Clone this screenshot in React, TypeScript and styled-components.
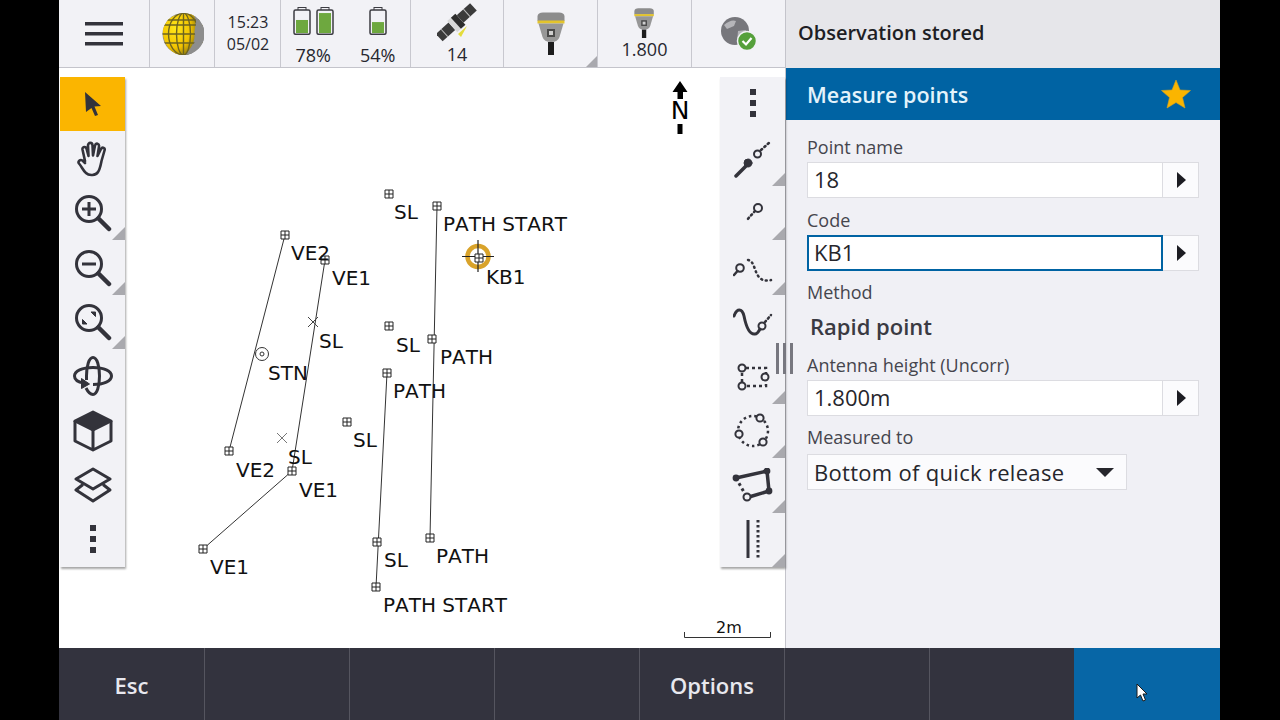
import styled, { createGlobalStyle } from 'styled-components';

const GlobalStyle = createGlobalStyle`
  html, body {
    margin: 0;
    background: #000;
  }
  * {
    box-sizing: border-box;
  }
`;
const Screen = styled.div`
  display: grid;
  grid-template-columns: 726px 435px;
  grid-template-rows: 68px 580px 72px;
  width: 1280px;
  height: 720px;
  padding: 0 60px 0 59px;
  position: relative;
  overflow: hidden;
  font-family: 'Open Sans', 'Noto Sans', sans-serif;
  color: #27272f;
`;
const TopBar = styled.div`
  display: grid;
  grid-template-columns: 91px 65px 66px 130px 93px 94px 94px 93px;
  background: #f2f2f6;
  border-bottom: 1px solid #c4c4cb;
`;
const TopCell = styled.div<{ $corner?: boolean }>`
  position: relative;
  display: flex;
  flex-direction: column;
  align-items: center;
  justify-content: center;
  border-right: 1px solid #c8c8cf;
  font-size: 18px;
  &:last-child {
    border-right: none;
  }
  ${(p) =>
    p.$corner &&
    `&::after {
      content: '';
      position: absolute;
      right: 0;
      bottom: 0;
      border-style: solid;
      border-width: 0 0 11px 11px;
      border-color: transparent transparent #a9a9ae transparent;
    }`}
`;
const Clock = styled.div`
  font-size: 16px;
  line-height: 22px;
  text-align: center;
  margin-top: -2px;
  padding-left: 1px;
`;
const Batteries = styled.div`
  display: grid;
  grid-template-columns: 1fr 1fr;
  width: 100%;
  justify-items: center;
  padding: 5px 0 0;
`;
const BatteryCol = styled.div`
  display: flex;
  flex-direction: column;
  align-items: center;
  gap: 9px;
  font-size: 18px;
  line-height: 22px;
`;
const BatteryRow = styled.div`
  display: flex;
  gap: 5px;
  height: 28px;
`;
const CellNumber = styled.div`
  font-size: 18px;
  line-height: 20px;
  margin-top: 1px;
`;
const MapArea = styled.div`
  position: relative;
  display: flex;
  justify-content: space-between;
  align-items: flex-start;
  padding: 9px 0 0 1px;
  background: #fff;
`;
const MapCanvas = styled.svg`
  position: absolute;
  inset: 0;
  width: 100%;
  height: 100%;
  font-family: 'DejaVu Sans', sans-serif;
  font-size: 20px;
  font-kerning: none;
  fill: #111;
`;
const ToolBar = styled.div`
  position: relative;
  display: grid;
  grid-template-rows: repeat(9, 54.45px);
  width: 65px;
  background: #f2f2f6;
  box-shadow: 1px 2px 2px rgba(0, 0, 0, 0.35);
`;
const Tool = styled.div<{ $active?: boolean; $corner?: boolean }>`
  position: relative;
  display: flex;
  align-items: center;
  justify-content: center;
  background: ${(p) => (p.$active ? '#fbb500' : 'transparent')};
  ${(p) =>
    p.$corner &&
    `&::after {
      content: '';
      position: absolute;
      right: 0;
      bottom: 0;
      border-style: solid;
      border-width: 0 0 13px 13px;
      border-color: transparent transparent #a9a9ae transparent;
    }`}
`;
const Panel = styled.div`
  grid-column: 2;
  grid-row: 1 / 3;
  display: flex;
  flex-direction: column;
  background: #f0f0f5;
  border-left: 1px solid #c4c4cb;
`;
const StatusBar = styled.div`
  display: flex;
  align-items: center;
  height: 68px;
  padding-left: 12px;
  padding-bottom: 4px;
  background: #e6e6ea;
  font-size: 20px;
  font-weight: 600;
  color: #1e1e24;
`;
const TitleBar = styled.div`
  display: flex;
  align-items: center;
  justify-content: space-between;
  height: 52px;
  padding: 0 29px 0 21px;
  background: #0063a3;
  font-size: 21.5px;
  font-weight: 600;
  color: #e4f3fb;
`;
const Form = styled.div`
  display: flex;
  flex-direction: column;
  padding: 15px 21px 0;
`;
const FieldLabel = styled.div`
  font-size: 18px;
  line-height: 24px;
  color: #45454d;
  margin-bottom: 3px;
`;
const FieldRow = styled.div<{ $gap: number }>`
  display: flex;
  width: 392px;
  height: 36px;
  margin-bottom: ${(p) => p.$gap}px;
`;
const FieldValue = styled.div<{ $focused?: boolean }>`
  flex: 1;
  display: flex;
  align-items: center;
  padding-left: ${(p) => (p.$focused ? '5px' : '6px')};
  padding-bottom: 3px;
  background: #fff;
  border: ${(p) => (p.$focused ? '2px solid #0063a3' : '1px solid #dcdce1')};
  font-size: 22px;
  font-weight: 500;
  color: #26262c;
`;
const ArrowButton = styled.div`
  width: 36px;
  display: flex;
  align-items: center;
  justify-content: center;
  padding-left: 2px;
  background: #fbfbfd;
  border: 1px solid #dcdce1;
  border-left: none;
`;
const Triangle = styled.div`
  width: 0;
  height: 0;
  border-style: solid;
  border-width: 8px 0 8px 9px;
  border-color: transparent transparent transparent #1c1c22;
`;
const StaticValue = styled.div`
  font-size: 22px;
  line-height: 30px;
  font-weight: 600;
  color: #3a3a42;
  padding-left: 3px;
  margin: 4px 0 12px;
`;
const Select = styled.div`
  display: flex;
  align-items: center;
  justify-content: space-between;
  width: 320px;
  height: 36px;
  margin-top: 2px;
  padding: 0 12px 0 6px;
  background: #fbfbfd;
  border: 1px solid #dcdce1;
  font-size: 22px;
  font-weight: 500;
  letter-spacing: 0.3px;
  color: #26262c;
`;
const DownTriangle = styled.div`
  width: 0;
  height: 0;
  border-style: solid;
  border-width: 9px 9px 0 9px;
  border-color: #26262c transparent transparent transparent;
`;
const BottomBar = styled.div`
  grid-column: 1 / 3;
  display: grid;
  grid-template-columns: repeat(7, 145px) 1fr;
  background: #33333e;
`;
const SoftKey = styled.div<{ $primary?: boolean }>`
  display: flex;
  align-items: center;
  justify-content: center;
  padding-top: 1px;
  background: ${(p) => (p.$primary ? '#0766a6' : 'transparent')};
  border-left: ${(p) => (p.$primary ? 'none' : '1px solid #55555f')};
  font-size: 22px;
  font-weight: 600;
  color: #e8e8ee;
  &:first-child {
    border-left: none;
  }
`;
const Grip = styled.div`
  position: absolute;
  left: 776px;
  top: 343px;
  display: flex;
  gap: 4px;
`;
const GripLine = styled.div`
  width: 3px;
  height: 31px;
  background: #77777f;
`;
const Pointer = styled.svg`
  position: absolute;
  left: 1136px;
  top: 683px;
`;

const ink = '#33333b';

const Kebab = () => (
  <svg width="12" height="34" viewBox="0 0 12 34" fill={ink}>
    <rect x="3" y="2" width="6" height="6" />
    <rect x="3" y="13" width="6" height="6" />
    <rect x="3" y="24" width="6" height="6" />
  </svg>
);

const Magnifier = ({ kind }: { kind: 'plus' | 'minus' | 'fit' }) => (
  <svg width="38" height="38" viewBox="0 0 38 38" fill="none" stroke={ink} strokeWidth="3">
    <circle cx="15" cy="15" r="12.5" />
    <line x1="24.5" y1="24.5" x2="35" y2="35" strokeWidth="4.5" strokeLinecap="round" />
    {kind !== 'fit' && <line x1="8" y1="15" x2="22" y2="15" />}
    {kind === 'plus' && <line x1="15" y1="8" x2="15" y2="22" />}
    {kind === 'fit' && <path d="M17 9h4.500v4.500zM13 21h-4.500v-4.500z" fill={ink} strokeWidth="1" />}
  </svg>
);

const ToolIcons = {
  arrow: (
    <svg width="18" height="26" viewBox="0 0 18 26" fill={ink}>
      <path d="M1 1 L17 15 L10.500 15.500 L14 24 L11 25 L7.500 17 L2 21 Z" />
    </svg>
  ),
  hand: (
    <svg width="32" height="36" viewBox="0 0 32 36" fill="none" stroke={ink} strokeWidth="2.600" strokeLinecap="round" strokeLinejoin="round">
      <path d="M8 20 L5.500 8.500 C5 5.500 9 5 9.600 8 L11.500 15 L11 4.500 C11 1 15.500 1 15.500 4.500 L16 14.500 L18 4.500 C18.800 1.500 22.500 2.500 22 5.500 L20.500 15 L24 8 C25.500 5.500 28.500 7 27.500 9.500 L24.500 20 C23.500 25 23 28 21 31 C19 34.500 12 35 9 32 C6 29.500 5 26 2 22.500 C0.500 20.500 3 18 5.500 19.500 L8 22" />
    </svg>
  ),
  orbit: (
    <svg width="40" height="40" viewBox="0 0 40 40" fill="none" stroke={ink} strokeWidth="3">
      <path d="M11 27 C4 26 1.500 23 1.500 20 C1.500 15 9 11.500 20 11.500 C31 11.500 38.500 15 38.500 20 C38.500 25 31 28.500 20 28.500" />
      <path d="M13 32 C15 36 17 38.500 20 38.500 C24 38.500 26.500 30 26.500 20 C26.500 10 24 1.500 20 1.500 C16 1.500 13.500 10 13.500 20 L13.500 24" />
      <path d="M8.500 22.500 L16.500 28 L8.500 32.500z" fill={ink} strokeWidth="1" />
    </svg>
  ),
  cube: (
    <svg width="40" height="42" viewBox="0 0 40 42" fill="none" stroke={ink} strokeWidth="3" strokeLinejoin="round">
      <path d="M20 2 L38 11 L20 20 L2 11 Z" fill={ink} />
      <path d="M2 11 V31 L20 40 L38 31 V11 M20 20 V40" />
    </svg>
  ),
  layers: (
    <svg width="38" height="36" viewBox="0 0 38 36" fill="none" stroke={ink} strokeWidth="3" strokeLinejoin="round">
      <path d="M19 2 L36 12 L19 22 L2 12 Z" />
      <path d="M9 17.500 L2 23 L19 34 L36 23 L29 17.500" />
    </svg>
  ),
  inside: (
    <svg width="38" height="38" viewBox="0 0 38 38" fill="none" stroke={ink} strokeLinecap="round">
      <line x1="2" y1="36" x2="13" y2="25" strokeWidth="3.500" />
      <circle cx="14" cy="23" r="4" fill={ink} />
      <circle cx="23.500" cy="14" r="3.500" strokeWidth="2" />
      <path d="M27 10 L36 2" strokeWidth="2.500" strokeDasharray="1.500 3" />
    </svg>
  ),
  stakeEnd: (
    <svg width="24" height="22" viewBox="0 0 24 22" fill="none" stroke={ink} strokeLinecap="round">
      <circle cx="17" cy="6" r="4" strokeWidth="2" />
      <path d="M14 9 L5 19" strokeWidth="2.500" strokeDasharray="1.500 3" />
    </svg>
  ),
  curveDots: (
    <svg width="40" height="30" viewBox="0 0 40 30" fill="none" stroke={ink} strokeLinecap="round">
      <line x1="1" y1="22" x2="4.500" y2="18" strokeWidth="2.500" />
      <circle cx="7" cy="15" r="3.800" strokeWidth="2" />
      <path d="M15 7 C22 8 21 20 27 25 C30 28 34 28 38 27" strokeWidth="2.500" strokeDasharray="1 3.800" />
    </svg>
  ),
  curve: (
    <svg width="40" height="30" viewBox="0 0 40 30" fill="none" stroke={ink}>
      <path d="M1 9 C4 1 9 1 11 9 C13 19 16 28 22 27 C24 27 26 24 27 22" strokeWidth="3" strokeLinecap="round" />
      <circle cx="29" cy="19" r="3.500" strokeWidth="2" />
      <path d="M32 15 L38 8" strokeWidth="2.500" strokeDasharray="1.500 3" strokeLinecap="round" />
    </svg>
  ),
  rectDots: (
    <svg width="34" height="30" viewBox="0 0 34 30" fill="none" stroke={ink} strokeWidth="2">
      <path d="M10 7 H30 V25 H10 M6 12 V21" strokeWidth="2.500" strokeDasharray="3 3" />
      <circle cx="6" cy="7" r="3.500" fill="#f2f2f6" />
      <circle cx="6" cy="25" r="3.500" fill="#f2f2f6" />
      <circle cx="29" cy="16" r="3.500" fill="#f2f2f6" />
    </svg>
  ),
  circleDots: (
    <svg width="38" height="36" viewBox="0 0 38 36" fill="none" stroke={ink}>
      <circle cx="19" cy="18" r="15" strokeWidth="2.500" strokeDasharray="2.500 3" />
      <circle cx="26" cy="5" r="3.600" strokeWidth="2" fill="#f2f2f6" />
      <circle cx="5" cy="21" r="3.600" strokeWidth="2" fill="#f2f2f6" />
      <circle cx="29" cy="29" r="3.600" strokeWidth="2" fill="#f2f2f6" />
    </svg>
  ),
  polygon: (
    <svg width="42" height="34" viewBox="0 0 42 34" fill="none" stroke={ink} strokeWidth="3.500">
      <path d="M4 10 L35 3 L37 23 L17 29" />
      <path d="M4 10 L13 26" strokeDasharray="3 3" strokeWidth="3" />
      <circle cx="4" cy="10" r="3.400" fill={ink} strokeWidth="0" />
      <circle cx="35" cy="3" r="3.400" fill={ink} strokeWidth="0" />
      <circle cx="37" cy="23" r="3.400" fill={ink} strokeWidth="0" />
      <circle cx="15" cy="29" r="3.500" fill="#f2f2f6" strokeWidth="2" />
    </svg>
  ),
  parallel: (
    <svg width="14" height="40" viewBox="0 0 14 40" fill="none" stroke={ink}>
      <line x1="2" y1="0" x2="2" y2="38" strokeWidth="3" />
      <line x1="12" y1="0" x2="12" y2="38" strokeWidth="3" strokeDasharray="2.500 2.500" />
    </svg>
  ),
};

const Globe = () => (
  <svg width="44" height="44" viewBox="-1.500 0 44 44">
    <defs>
      <radialGradient id="gold" cx="40%" cy="35%" r="70%">
        <stop offset="0%" stopColor="#ffe81a" />
        <stop offset="65%" stopColor="#f2c300" />
        <stop offset="100%" stopColor="#8f7a10" />
      </radialGradient>
      <clipPath id="ball">
        <circle cx="22" cy="22" r="21" />
      </clipPath>
    </defs>
    <circle cx="22" cy="22" r="21" fill="#8d8d8d" />
    <g clipPath="url(#ball)">
      <path d="M1 14 C8 3 18 0 32 2 C36 12 32 18 33 24 C33 32 27 40 22 44 C10 44 0 32 1 14Z" fill="url(#gold)" />
      <g fill="none" stroke="#6d6420" strokeWidth="1.400">
        <path d="M0 13 H44 M0 22 H44 M0 31 H44 M3 8 H40" />
        <ellipse cx="22" cy="22" rx="7" ry="21" />
        <ellipse cx="22" cy="22" rx="15" ry="21" />
        <line x1="22" y1="0" x2="22" y2="44" />
      </g>
      <path d="M33 2 C37 12 32 18 34 25 C34 33 28 40 23 44 H44 V0 Z" fill="#8d8d8d" />
    </g>
  </svg>
);

const Battery = ({ level }: { level: number }) => (
  <svg width="18" height="28" viewBox="0 0 18 28">
    <rect x="5" y="0.500" width="8" height="3" fill="#f2f2f6" stroke="#3c3c42" />
    <rect x="1" y="3" width="16" height="24.300" rx="1.500" fill="#f2f2f6" stroke="#3c3c42" strokeWidth="1.500" />
    <rect x="3" y={26 - 21 * level} width="12" height={21 * level} fill="#6ea83f" />
  </svg>
);

const Satellite = () => (
  <svg width="40" height="40" viewBox="0 0 40 40">
    <g transform="rotate(-42 20 20)">
      <rect x="-3" y="14" width="17" height="10" fill="#3b3b3b" />
      <rect x="25" y="14" width="18" height="10" fill="#3b3b3b" />
      <line x1="4" y1="14" x2="4" y2="24" stroke="#bbb" />
      <line x1="34" y1="14" x2="34" y2="24" stroke="#bbb" />
      <rect x="14" y="12" width="11" height="15" fill="#d8d8d8" />
      <rect x="19" y="12" width="6" height="15" fill="#2d2d2d" />
    </g>
    <path d="M21 31 L30 23 L24 34z" fill="#e4dc3b" />
  </svg>
);

const Receiver = ({ scale }: { scale: number }) => (
  <svg width={28 * scale} height={43 * scale} viewBox="0 0 28 43">
    <path d="M0.500 4 Q1 0.500 6 0.500 H22 Q27 0.500 27.500 4 V9 H0.500Z" fill="#8c8c8c" />
    <rect x="0.500" y="8.500" width="27" height="3" fill="#e3c42c" />
    <path d="M1.500 11.500 H26.500 L22.500 25 Q21 30 14 30 Q7 30 5.500 25Z" fill="#979797" />
    <rect x="10" y="17" width="8" height="8" fill="#4a4a4a" />
    <rect x="12" y="19" width="4" height="4" fill="#cfcfcf" />
    <rect x="11" y="30" width="6" height="13" fill="#1d1d1d" />
  </svg>
);

const WebStatus = () => (
  <svg width="38" height="36" viewBox="0 -2 38 36">
    <circle cx="15" cy="13" r="14" fill="#77777c" />
    <path d="M4 7 Q11 1 16 3 L14 8 L7 11 Z M18 13 L26 12 L24 22 L17 24 Z" fill="#b5b5b9" />
    <circle cx="27" cy="23" r="9.500" fill="#55a03b" stroke="#f2f2f6" strokeWidth="1.500" />
    <path d="M22.500 23 L26 26.500 L31.500 20" fill="none" stroke="#fff" strokeWidth="2.200" />
  </svg>
);

const Hamburger = () => (
  <svg width="38" height="26" viewBox="0 0 38 26" fill="#33333b">
    <rect x="0" y="1" width="38" height="3.500" />
    <rect x="0" y="11" width="38" height="3.500" />
    <rect x="0" y="21" width="38" height="3.500" />
  </svg>
);

const Star = () => (
  <svg width="30" height="30" viewBox="0 0 30 30">
    <path d="M15 1 L19 11 L29.500 11.500 L21.500 18.500 L24 29 L15 23.500 L6 29 L8.500 18.500 L0.500 11.500 L11 11Z" fill="#fbb500" stroke="#d9a21c" strokeWidth="0.600" />
  </svg>
);

const points = [
  [389, 194], [437, 206], [285, 235], [325, 260], [229, 451], [292, 471], [203, 549],
  [389, 326], [432, 339], [387, 373], [347, 422], [377, 542], [376, 587], [430, 538], [479, 258],
];
const lines = [
  [285, 235, 229, 451],
  [325, 260, 292, 471],
  [292, 471, 203, 549],
  [437, 206, 430, 538],
  [387, 373, 376, 587],
];
const labels: [string, number, number][] = [
  ['SL', 394, 219], ['PATH START', 443, 231], ['VE2', 291, 260], ['VE1', 332, 285], ['KB1', 486, 284],
  ['SL', 319, 348], ['STN', 268, 380], ['SL', 396, 352], ['PATH', 440, 364], ['PATH', 393, 398],
  ['SL', 353, 447], ['SL', 288, 464], ['VE2', 236, 477], ['VE1', 299, 497], ['VE1', 210, 574],
  ['SL', 384, 567], ['PATH', 436, 563], ['PATH START', 383, 612],
];

const PointMap = () => (
  <MapCanvas viewBox="59 68 726 580">
    {lines.map(([x1, y1, x2, y2], i) => (
      <line key={i} x1={x1} y1={y1} x2={x2} y2={y2} stroke="#333" strokeWidth="1" />
    ))}
    <circle cx="478" cy="256.500" r="10.500" fill="none" stroke="#d9a32a" strokeWidth="4.500" />
    <path d="M462 256.500 H494 M478 240 V272" stroke="#222" strokeWidth="1.200" />
    {points.map(([x, y], i) => (
      <path
        key={i}
        d={`M${x - 4} ${y - 4} h8 v8 h-8 z M${x} ${y - 4} v8 M${x - 4} ${y} h8`}
        fill="#fff"
        stroke="#222"
        strokeWidth="1"
      />
    ))}
    <path d="M308 317 L318 327 M318 317 L308 327" stroke="#444" strokeWidth="1" />
    <path d="M277 433 L287 443 M287 433 L277 443" stroke="#777" strokeWidth="1" />
    <circle cx="262" cy="354" r="6.500" fill="none" stroke="#333" />
    <circle cx="262" cy="354" r="2" fill="none" stroke="#333" />
    {labels.map(([text, x, y], i) => (
      <text key={i} x={x} y={y}>
        {text}
      </text>
    ))}
    <path d="M680 81 L687.500 92 H683 V99 H677.500 V92 H672.500 Z" fill="#000" />
    <text x="680" y="119" textAnchor="middle" fontSize="25" fill="#000">
      N
    </text>
    <rect x="677.500" y="124" width="5" height="10" fill="#000" />
    <path d="M684.500 632 V637.500 H770.500 V632" fill="none" stroke="#333" />
    <text x="729" y="633" textAnchor="middle" fontSize="16">
      2m
    </text>
  </MapCanvas>
);

export default function App() {
  return (
    <Screen>
      <GlobalStyle />
      <TopBar>
        <TopCell>
          <Hamburger />
        </TopCell>
        <TopCell>
          <Globe />
        </TopCell>
        <TopCell>
          <Clock>
            15:23
            <br />
            05/02
          </Clock>
        </TopCell>
        <TopCell>
          <Batteries>
            <BatteryCol>
              <BatteryRow>
                <Battery level={0.62} />
                <Battery level={0.95} />
              </BatteryRow>
              78%
            </BatteryCol>
            <BatteryCol>
              <BatteryRow>
                <Battery level={0.52} />
              </BatteryRow>
              54%
            </BatteryCol>
          </Batteries>
        </TopCell>
        <TopCell>
          <Satellite />
          <CellNumber>14</CellNumber>
        </TopCell>
        <TopCell $corner>
          <Receiver scale={1} />
        </TopCell>
        <TopCell>
          <Receiver scale={0.72} />
          <CellNumber>1.800</CellNumber>
        </TopCell>
        <TopCell>
          <WebStatus />
        </TopCell>
      </TopBar>
      <Panel>
        <StatusBar>Observation stored</StatusBar>
        <TitleBar>
          Measure points
          <Star />
        </TitleBar>
        <Form>
          <FieldLabel>Point name</FieldLabel>
          <FieldRow $gap={10}>
            <FieldValue>18</FieldValue>
            <ArrowButton>
              <Triangle />
            </ArrowButton>
          </FieldRow>
          <FieldLabel>Code</FieldLabel>
          <FieldRow $gap={9}>
            <FieldValue $focused>KB1</FieldValue>
            <ArrowButton>
              <Triangle />
            </ArrowButton>
          </FieldRow>
          <FieldLabel>Method</FieldLabel>
          <StaticValue>Rapid point</StaticValue>
          <FieldLabel>Antenna height (Uncorr)</FieldLabel>
          <FieldRow $gap={9}>
            <FieldValue>1.800m</FieldValue>
            <ArrowButton>
              <Triangle />
            </ArrowButton>
          </FieldRow>
          <FieldLabel>Measured to</FieldLabel>
          <Select>
            Bottom of quick release
            <DownTriangle />
          </Select>
        </Form>
      </Panel>
      <MapArea>
        <PointMap />
        <ToolBar>
          <Tool $active>{ToolIcons.arrow}</Tool>
          <Tool>{ToolIcons.hand}</Tool>
          <Tool $corner>
            <Magnifier kind="plus" />
          </Tool>
          <Tool $corner>
            <Magnifier kind="minus" />
          </Tool>
          <Tool $corner>
            <Magnifier kind="fit" />
          </Tool>
          <Tool>{ToolIcons.orbit}</Tool>
          <Tool>{ToolIcons.cube}</Tool>
          <Tool>{ToolIcons.layers}</Tool>
          <Tool>
            <Kebab />
          </Tool>
        </ToolBar>
        <ToolBar>
          <Tool>
            <Kebab />
          </Tool>
          <Tool $corner>{ToolIcons.inside}</Tool>
          <Tool $corner>{ToolIcons.stakeEnd}</Tool>
          <Tool $corner>{ToolIcons.curveDots}</Tool>
          <Tool>{ToolIcons.curve}</Tool>
          <Tool $corner>{ToolIcons.rectDots}</Tool>
          <Tool $corner>{ToolIcons.circleDots}</Tool>
          <Tool $corner>{ToolIcons.polygon}</Tool>
          <Tool $corner>{ToolIcons.parallel}</Tool>
        </ToolBar>
      </MapArea>
      <BottomBar>
        <SoftKey>Esc</SoftKey>
        <SoftKey />
        <SoftKey />
        <SoftKey />
        <SoftKey>Options</SoftKey>
        <SoftKey />
        <SoftKey />
        <SoftKey $primary />
      </BottomBar>
      <Grip>
        <GripLine />
        <GripLine />
        <GripLine />
      </Grip>
      <Pointer width="12" height="19" viewBox="0 0 12 19">
        <path d="M1 1 L1 15 L4.500 12 L7 18 L9.500 17 L7 11 L11 11 Z" fill="#fff" stroke="#1a1a1a" strokeWidth="1" />
      </Pointer>
    </Screen>
  );
}
